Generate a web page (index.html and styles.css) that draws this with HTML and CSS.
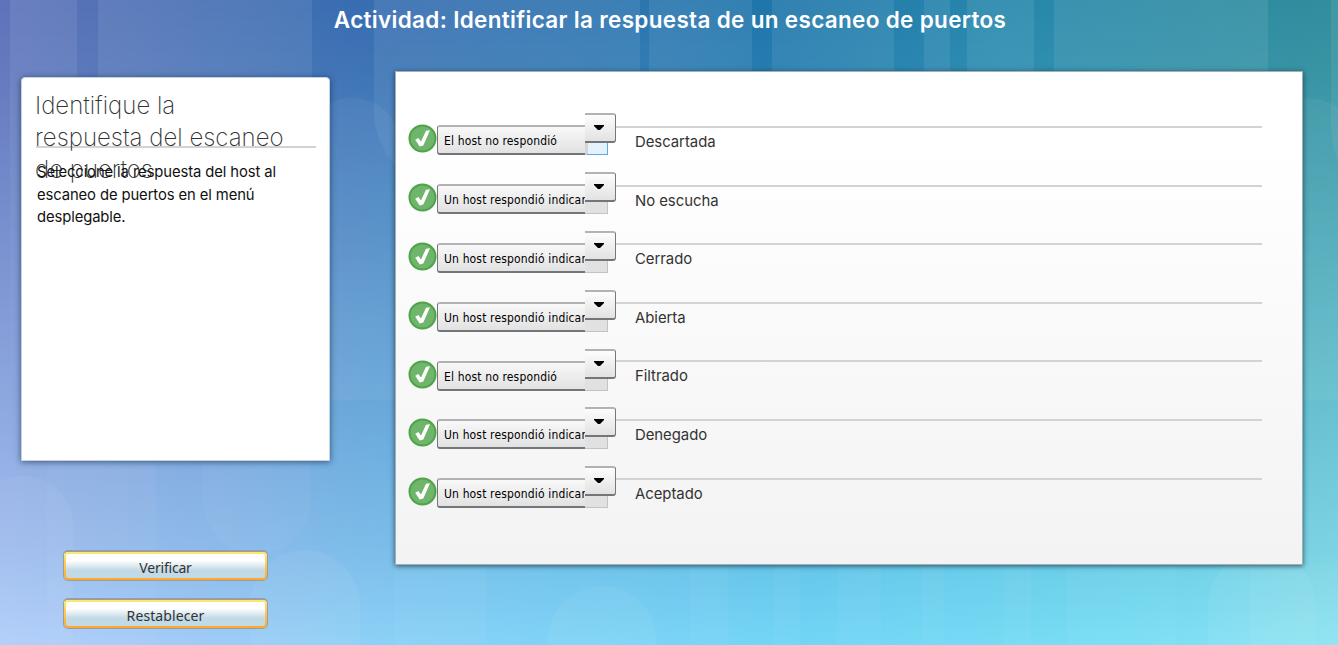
FILE: index.html
```html
<!DOCTYPE html>
<html lang="es">
<head>
<meta charset="utf-8">
<title>Actividad</title>
<link rel="stylesheet" href="styles.css">
</head>
<body>
<svg class="backdrop" viewBox="0 0 1338 645" preserveAspectRatio="none" aria-hidden="true">
  <defs>
    <linearGradient id="top"><stop offset="0" stop-color="#5f73ba"/><stop offset=".1" stop-color="#4f71b5"/><stop offset=".26" stop-color="#396db1"/><stop offset=".5" stop-color="#2a76af"/><stop offset=".57" stop-color="#2075ab"/><stop offset=".75" stop-color="#2888ac"/><stop offset="1" stop-color="#328e9c"/></linearGradient>
    <linearGradient id="bottom"><stop offset="0" stop-color="#b0cefa"/><stop offset=".15" stop-color="#a0ccf7"/><stop offset=".3" stop-color="#8ad2f7"/><stop offset=".6" stop-color="#73d6f6"/><stop offset=".85" stop-color="#7adef5"/><stop offset="1" stop-color="#90e4f3"/></linearGradient>
    <linearGradient id="fade" x2="0" y2="1"><stop offset="0" stop-color="#000"/><stop offset=".12" stop-color="#161616"/><stop offset=".5" stop-color="#777"/><stop offset=".85" stop-color="#ccc"/><stop offset="1" stop-color="#fff"/></linearGradient>
    <linearGradient id="band" gradientUnits="userSpaceOnUse" x1="0" y1="0" x2="0" y2="400"><stop offset="0" stop-color="#fff" stop-opacity=".08"/><stop offset=".2" stop-color="#fff" stop-opacity=".07"/><stop offset="1" stop-color="#fff" stop-opacity="0"/></linearGradient>
    <mask id="blend"><rect width="1338" height="645" fill="url(#fade)"/></mask>
  </defs>
  <rect width="1338" height="645" fill="url(#top)"/>
  <rect width="1338" height="645" fill="url(#bottom)" mask="url(#blend)"/>
  <g fill="url(#band)">
    <path d="M10 0h67v400H10zM98 0h22v400H98zM120 0h192v400H120zM203 0h4v400h-4zM374 0h266v80H396v86q-22-25-22-55zM419 0h14v75h-14zM459 0h39v75h-39zM649 0h103v75H649zM772 0h122v75H772zM841 0h41v75h-41zM924 0h26v75h-26zM967 0h67v75h-67zM1054 0h22v75h-22zM1076 0h192v75h-192zM1159 0h5v75h-5zM1331 0h7v160q-7-15-7-40z"/>
  </g>
  <g fill="#fff" fill-opacity=".05">
    <path d="M330 400V103q10-5 20-5 32 0 46 27v275zM1290 98h13q20 0 35 9v293h-48z"/>
    <path d="M-25 645V525a49 49 0 0 1 98 0v120zM250 645v-40a55 55 0 0 1 110 0v40zM548 645v-5a54 54 0 0 1 108 0v5zM1208 645v-40a54 54 0 0 1 108 0v40z"/>
  </g>
  <g fill="#fff" fill-opacity=".035">
    <path d="M47 440h109v205H47zM110 440h46v205h-46zM203 440v60a54 54 0 0 0 108 0v-60zM394 565h92v80H394zM690 565h38v80h-38zM774 565h26v80h-26zM837 565h44v80h-44zM922 565h22v80h-22zM1004 565h27v80h-27zM1067 565h45v80h-45zM1112 565h64v80h-64zM1250 565h88v80h-88z"/>
  </g>
</svg>
<h1 class="page-title">Actividad: Identificar la respuesta de un escaneo de puertos</h1>
<main class="layout">
  <aside class="side">
    <section class="intro">
      <div class="intro-head"><h2>Identifique la<br>respuesta del escaneo<br>de puertos</h2></div>
      <p>Seleccione la respuesta del host al<br>escaneo de puertos en el menú<br>desplegable.</p>
    </section>
    <button class="action">Verificar</button>
    <button class="action wide">Restablecer</button>
  </aside>
  <section class="board" id="board"></section>
</main>
<script src="app.js"></script>
</body>
</html>
```
FILE: styles.css
```css
* { box-sizing: border-box; }
body { margin: 0; width: 1338px; height: 645px; overflow: hidden; font-family: Inter, sans-serif; }
.backdrop { position: absolute; inset: 0; width: 1338px; height: 645px; z-index: -1; }
.page-title { margin: 0; height: 71px; padding: 5px 0 0 2px; color: #fff; text-align: center; font: 600 22.5px/30px Inter, sans-serif; letter-spacing: .32px; white-space: nowrap; }
.layout { display: flex; align-items: flex-start; padding-left: 21px; gap: 65px; }
.side { width: 309px; padding-top: 6px; display: flex; flex-direction: column; }
.intro { height: 384px; margin-bottom: 89px; padding: 12px 13px 12px 14px; background: #fff; border: 1px solid #c3d2e3; border-radius: 4px 4px 0 0; box-shadow: 0 1px 6px rgba(20, 40, 70, .65); }
.intro-head { height: 58px; border-bottom: 2px solid #d3d3d3; }
.intro h2 { margin: 0 0 0 -1px; color: #333; font: 200 24px/32px Inter, sans-serif; white-space: nowrap; }
.intro p { margin: 13px 0 0 1px; position: relative; color: #111; font: 400 14.8px/22.5px Inter, sans-serif; letter-spacing: -.1px; white-space: nowrap; }
.action { width: 205px; height: 31px; margin: 0 0 17px 42px; padding: 4px 0 0; color: #333; font: 14px/20px "Noto Sans", sans-serif; letter-spacing: -.2px; border: 2px solid #999ea0; border-width: 2px 1px 1px; border-radius: 5px; background: linear-gradient(#fff 30%, #c2dae6 65%) padding-box; position: relative; }
.action.wide { letter-spacing: .1px; }
.action::before { content: ""; position: absolute; inset: 0; padding: 2px; border-radius: 4px; background: linear-gradient(#ffe873, #ffa52c); mask: linear-gradient(#000 0 0) content-box exclude, linear-gradient(#000 0 0); }
.board { width: 908px; height: 494px; padding: 41px 40px 0 12px; background: linear-gradient(#fff 15%, #f3f3f3); border: 1px solid #a5adb5; box-shadow: 0 1px 5px rgba(20, 50, 70, .8); }
.row { display: flex; height: 59px; }
.row:nth-child(5) { height: 58px; }
.check { width: 29px; height: 29px; margin-top: 11px; flex: none; }
.select { display: flex; width: 179px; height: 42px; }
.value { width: 148px; height: 30px; margin-top: 12px; padding: 1px 0 0 6px; overflow: hidden; white-space: nowrap; color: #000; font: 12px/26px "DejaVu Sans Condensed", "DejaVu Sans", sans-serif; font-stretch: condensed; letter-spacing: .15px; border: 1px solid #b2b2b2; border-width: 2px 0 2px 1px; border-bottom-color: #71767a; border-left-color: #777; border-radius: 3px 0 0 3px; background: linear-gradient(#f8f8f8, #e2e2e2); }
.drop { position: relative; width: 31px; height: 30px; }
.arrow { position: relative; height: 30px; display: flex; align-items: center; justify-content: center; padding: 0 3px 0 0; border: 1px solid #b2b2b2; border-width: 2px 1px 2px 0; border-bottom-color: #71767a; border-right-color: #777; border-radius: 0 3px 3px 0; background: linear-gradient(#fdfdfd, #e2e2e2); }
.arrow svg { width: 10px; height: 6px; }
.under { position: absolute; left: 0; top: 28px; width: 23px; height: 14px; background: #e1e1e1; border: 1px solid #c3c3c3; border-left: 0; }
.row:first-child .under { background: #e5f1fb; border-color: #5ba9e8; border-left: 3px solid #d5d5d5; }
.label { flex: 1; margin-top: 13px; padding: 4px 0 0 19px; color: #333; border-top: 2px solid #d3d3d3; font: 400 14.9px/20px Inter, sans-serif; letter-spacing: -.04px; }
.row:nth-child(n+3) .label { margin-top: 12px; }
.row:nth-child(5) .label { margin-top: 11px; }
```
FILE: app.js
```js
const closed = 'Un host respondió indicar';
const silent = 'El host no respondió';
const rows = [
  ['Descartada', silent], ['No escucha', closed], ['Cerrado', closed],
  ['Abierta', closed], ['Filtrado', silent], ['Denegado', closed], ['Aceptado', closed],
];
document.getElementById('board').innerHTML = rows.map(([label, value]) => `
  <div class="row">
    <svg class="check" viewBox="0 0 29 29"><circle cx="14.5" cy="14.5" r="13" fill="#6fb56b" stroke="#4fa34a" stroke-width="2"/><path d="M7.2 15.8l3.2-1.8 2.6 3.4 5-10.6 4 -.6-6.7 15.4-3.6.8z" fill="#fff"/></svg>
    <div class="select"><div class="value">${value}</div><div class="drop"><span class="under"></span><div class="arrow"><svg viewBox="0 0 10 6"><path d="M0 0h10v1L6 5H4L0 1z"/></svg></div></div></div>
    <div class="label">${label}</div>
  </div>`).join('');
```
